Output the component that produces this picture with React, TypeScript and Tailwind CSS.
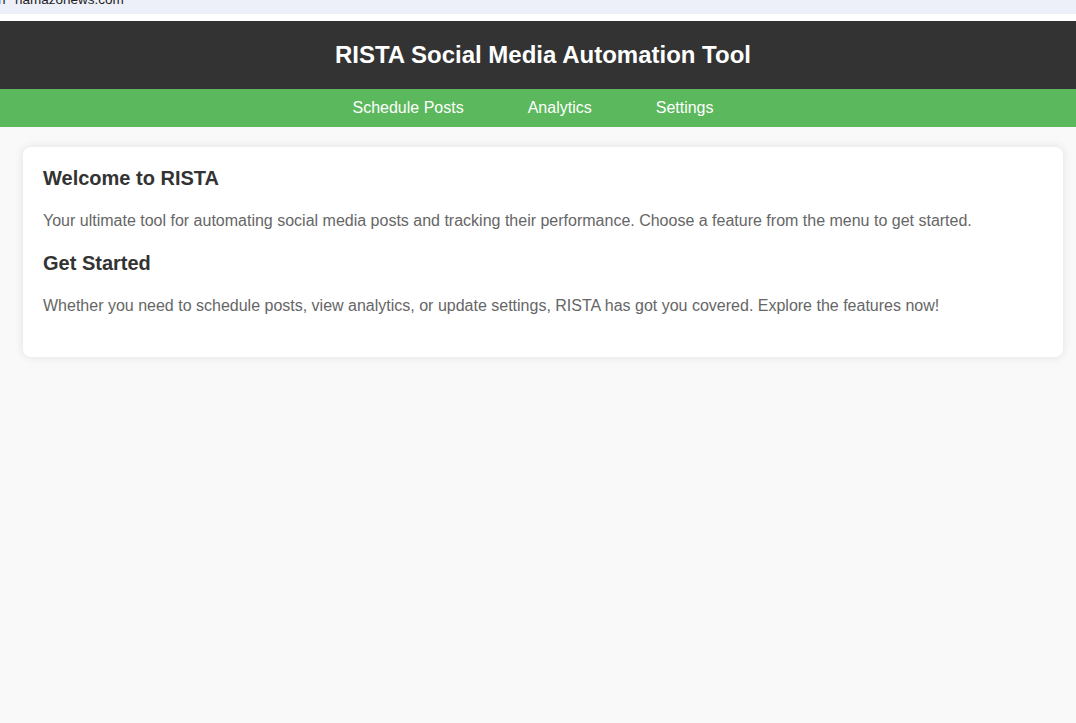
const navLinks = ["Schedule Posts", "Analytics", "Settings"];

const App = () => {
  return (
    <div className="w-full overflow-hidden">
      <div className="min-h-[723px] w-[1086px] bg-[#f9f9f9] font-['Liberation_Sans',Arial,sans-serif]">
        {/* browser strip, cut off at top */}
        <div className="h-[14px] overflow-hidden bg-[#edf0f9]">
          <div className="-mt-[8px] flex text-[13.5px] leading-[16px] text-[#222]">
            <span className="-ml-[2px] w-[17px]">n</span>
            <span>namazonews.com</span>
          </div>
        </div>
        <div className="h-[7px] bg-white"></div>

        <header className="flex h-[68px] items-center justify-center bg-[#333333]">
          <h1 className="text-[24px] font-bold text-white">
            RISTA Social Media Automation Tool
          </h1>
        </header>

        <nav className="flex h-[38px] items-center justify-center gap-[64px] bg-[#5cb85c] pr-[20px]">
          {navLinks.map((link) => (
            <a key={link} href="#" className="text-[16px] text-white">
              {link}
            </a>
          ))}
        </nav>

        <main className="px-[23px] pt-[20px]">
          <section className="rounded-lg bg-white p-5 shadow-[0_0_10px_rgba(0,0,0,0.1)]">
            <h2 className="mb-[22px] text-[20px] leading-[23px] font-bold text-[#333]">
              Welcome to RISTA
            </h2>
            <p className="mb-[22px] text-[16px] leading-[18px] text-[#666]">
              Your ultimate tool for automating social media posts and tracking
              their performance. Choose a feature from the menu to get started.
            </p>
            <h2 className="mb-[22px] text-[20px] leading-[23px] font-bold text-[#333]">
              Get Started
            </h2>
            <p className="mb-[22px] text-[16px] leading-[18px] text-[#666]">
              Whether you need to schedule posts, view analytics, or update
              settings, RISTA has got you covered. Explore the features now!
            </p>
          </section>
        </main>
      </div>
    </div>
  );
};

export default App;
